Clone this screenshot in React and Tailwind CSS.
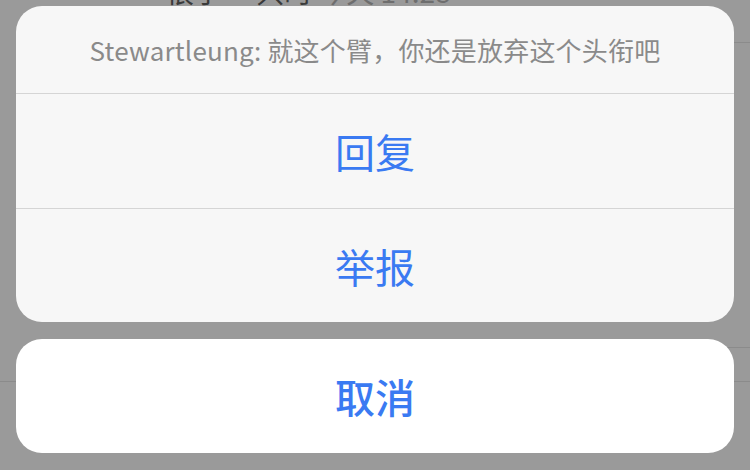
export default function App() {
  const actions = ["回复", "举报"];

  return (
    <div
      className="relative h-[470px] w-[750px] overflow-hidden bg-[#9a9a9a]"
      style={{ fontFamily: '"Noto Sans CJK SC", "Noto Sans", sans-serif' }}
    >
      {/* dimmed page behind the sheet */}
      <div className="flex flex-col">
        <div className="-mt-[26px] h-[69px] pl-[30px]">
          <div className="flex h-full items-start gap-[6px] border-b border-[#8b8b8b] pl-[136px] text-[28px] leading-[34px]">
            <span className="text-[#3a3a3a]">很小 一只时</span>
            <span className="text-[#6e6e6e]">今天 14:28</span>
          </div>
        </div>
        <div className="h-[305px] pl-[30px]">
          <div className="h-full border-b border-[#8b8b8b]" />
        </div>
        <div className="h-[34px] border-b border-[#8b8b8b]" />
      </div>

      {/* action sheet */}
      <div className="absolute inset-x-4 top-[6px] flex flex-col gap-[17px]">
        <div className="overflow-hidden rounded-[26px] bg-[#f7f7f7]">
          <div className="flex h-[88px] items-center justify-center border-b border-[#d5d5d5] text-[26px] tracking-[0.2px] text-[#8a8a8a]">
            Stewartleung: 就这个臂，你还是放弃这个头衔吧
          </div>
          {actions.map((label, i) => (
            <button
              key={label}
              type="button"
              className={`flex w-full items-center justify-center text-[40px] text-[#3a7af2] ${
                i === 0 ? "h-[115px] border-b border-[#d5d5d5]" : "h-[113px]"
              }`}
            >
              {label}
            </button>
          ))}
        </div>
        <button
          type="button"
          className="flex h-[114px] w-full items-center justify-center rounded-[26px] bg-white text-[40px] font-medium text-[#3a7af2]"
        >
          取消
        </button>
      </div>
    </div>
  );
}
